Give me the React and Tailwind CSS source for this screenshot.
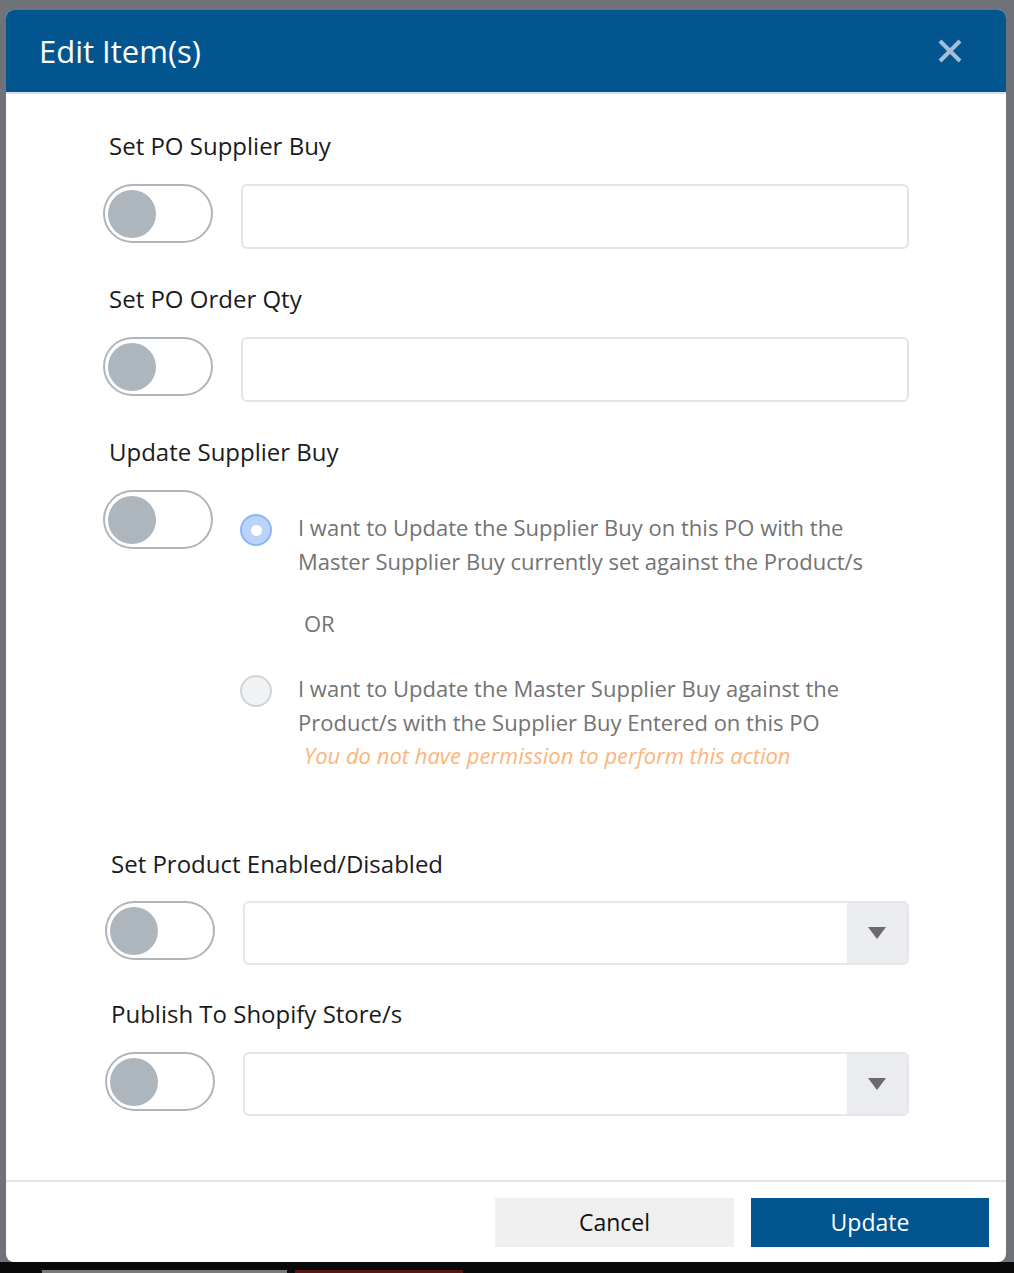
import React from 'react';

const font = { fontFamily: '"Open Sans", "Noto Sans", sans-serif' };

const Toggle = () => (
  <div className="w-[110px] h-[59px] shrink-0 rounded-full border-2 border-[#adb5bd] bg-white flex items-center pl-[3px]">
    <div className="w-[48px] h-[48px] rounded-full bg-[#adb5bd]" />
  </div>
);

const Label = ({ children }) => (
  <div className="ml-[6px] text-[24px] leading-[30px] text-[#1b1b1b]">{children}</div>
);

const TextInput = () => (
  <div className="flex-1 h-[65px] rounded-md border-2 border-[#e1e4e8] bg-white" />
);

const Select = () => (
  <div className="flex-1 h-[64px] rounded-md border-2 border-[#e4e6ea] bg-white flex overflow-hidden">
    <div className="flex-1" />
    <div className="w-[60px] bg-[#ebecef] flex items-center justify-center">
      <svg width="18" height="12" viewBox="0 0 18 12">
        <path d="M0 0 H18 L9 12 Z" fill="#6b6b6b" />
      </svg>
    </div>
  </div>
);

const Radio = ({ checked }) =>
  checked ? (
    <div className="w-[32px] h-[32px] shrink-0 mt-[4px] rounded-full border-2 border-[#8cb6f7] bg-[#b9d3fa] flex items-center justify-center">
      <div className="w-[11px] h-[11px] rounded-full bg-white" />
    </div>
  ) : (
    <div className="w-[32px] h-[32px] shrink-0 mt-[4px] rounded-full border-2 border-[#d0d4d9] bg-[#f1f2f4]" />
  );

export default function App() {
  return (
    <div className="w-[1014px] h-[1273px] bg-[#6f7278] flex flex-col" style={font}>
      <div className="h-[10px] shrink-0" />
      <div className="flex-1 pl-[6px]">
        <div className="w-[1000px] h-[1252px] bg-white rounded-lg overflow-hidden flex flex-col">
          <div className="h-[84px] shrink-0 bg-[#02558f] border-b-2 border-[#d7e0e9] flex items-center justify-between pl-[33px] pr-[44px]">
            <h1 className="text-[31px] text-white leading-none">Edit Item(s)</h1>
            <svg width="24" height="24" viewBox="0 0 24 24">
              <path d="M2 2 L22 22 M22 2 L2 22" stroke="#a6bed6" strokeWidth="4" />
            </svg>
          </div>

          <div className="flex-1 pl-[97px] pr-[97px] pt-[37px] flex flex-col">
            <Label>Set PO Supplier Buy</Label>
            <div className="mt-[23px] flex items-start gap-[28px]">
              <Toggle />
              <TextInput />
            </div>

            <div className="mt-[35px]">
              <Label>Set PO Order Qty</Label>
            </div>
            <div className="mt-[23px] flex items-start gap-[28px]">
              <Toggle />
              <TextInput />
            </div>

            <div className="mt-[35px]">
              <Label>Update Supplier Buy</Label>
            </div>
            <div className="mt-[23px] flex items-start gap-[27px]">
              <Toggle />
              <div className="flex-1 pt-[20px] text-[22px] leading-[34px] text-[#737373]">
                <div className="flex items-start gap-[26px]">
                  <Radio checked />
                  <p>I want to Update the Supplier Buy on this PO with the Master Supplier Buy currently set against the Product/s</p>
                </div>
                <div className="mt-[28px] ml-[64px]">OR</div>
                <div className="mt-[31px] flex items-start gap-[26px]">
                  <Radio />
                  <div>
                    <p>I want to Update the Master Supplier Buy against the Product/s with the Supplier Buy Entered on this PO</p>
                    <p className="ml-[6px] -mt-[1px] italic text-[#fdb57a]">You do not have permission to perform this action</p>
                  </div>
                </div>
              </div>
            </div>

            <div className="mt-[77px] ml-[2px]">
              <Label>Set Product Enabled/Disabled</Label>
            </div>
            <div className="mt-[22px] ml-[2px] flex items-start gap-[28px]">
              <Toggle />
              <Select />
            </div>

            <div className="mt-[34px] ml-[2px]">
              <Label>Publish To Shopify Store/s</Label>
            </div>
            <div className="mt-[23px] ml-[2px] flex items-start gap-[28px]">
              <Toggle />
              <Select />
            </div>
          </div>

          <div className="h-[82px] shrink-0 border-t-2 border-[#e1e5ea] flex justify-end items-start gap-[17px] pt-[16px] pr-[17px]">
            <button className="w-[239px] h-[49px] bg-[#efefef] text-[23px] text-[#111]">Cancel</button>
            <button className="w-[238px] h-[49px] bg-[#02558f] text-[23px] text-white">Update</button>
          </div>
        </div>
      </div>
      <div className="h-[11px] shrink-0 bg-[#0a0a0a] flex items-end gap-[8px] pl-[42px]">
        <div className="w-[245px] h-[3px] bg-[#7a7a7a]" />
        <div className="w-[168px] h-[3px] bg-[#5a1612]" />
      </div>
    </div>
  );
}
